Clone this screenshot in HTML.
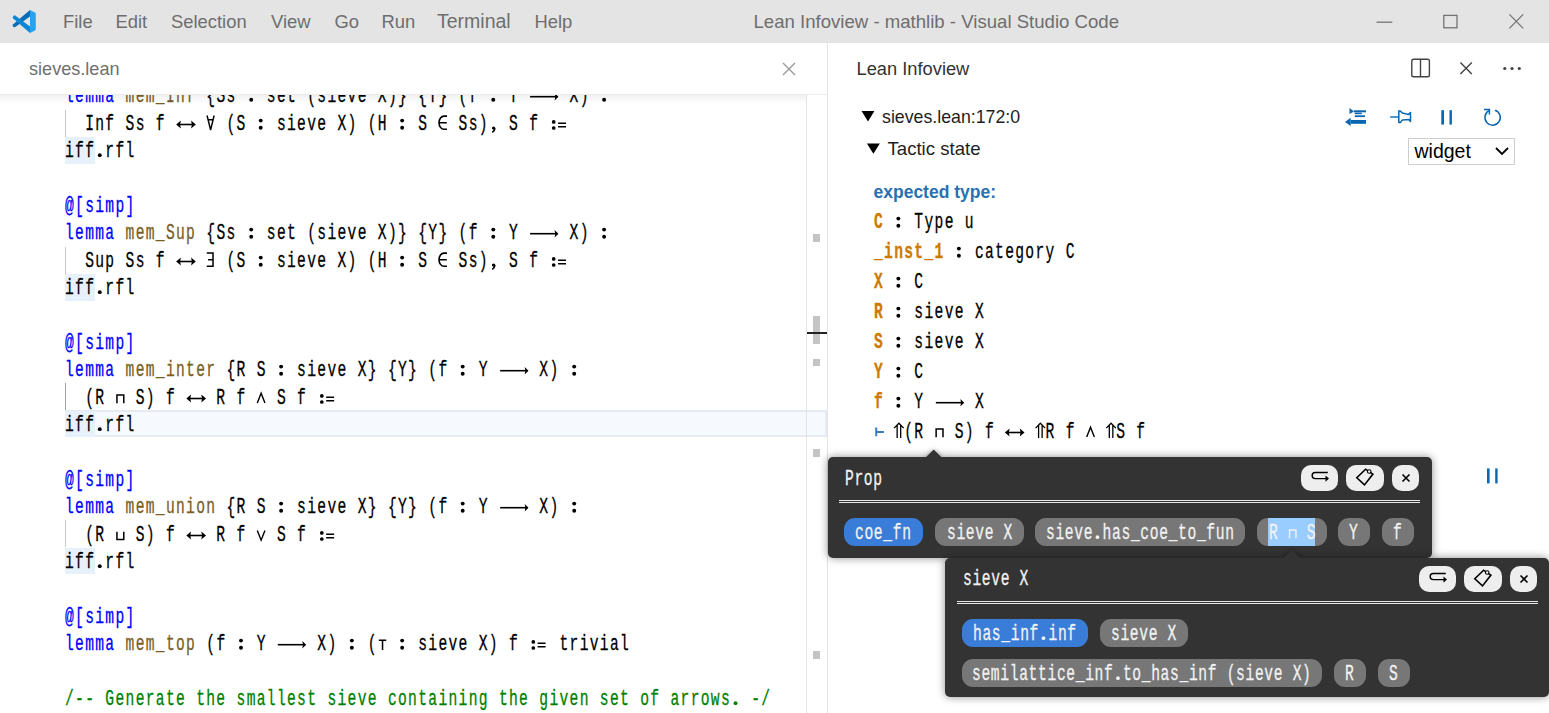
<!DOCTYPE html>
<html><head><meta charset="utf-8"><style>
*{margin:0;padding:0;box-sizing:border-box}
html,body{width:1549px;height:713px;overflow:hidden;background:#fff;position:relative;-webkit-font-smoothing:antialiased}
.a{position:absolute}
.ui{position:absolute;font-family:"Liberation Sans",sans-serif;white-space:pre;line-height:1}
.ln{position:absolute;left:65.329px;white-space:pre;font-family:"Liberation Mono",monospace;font-size:21.5px;line-height:27.38px;color:#000;transform:scaleX(0.68000);transform-origin:0 0;letter-spacing:1.9382px;-webkit-text-stroke:0.3px currentColor}
.iv{left:874.330px;line-height:27.38px}
.ib{display:inline-block;position:relative;height:0}
.c1{display:inline-block;text-align:center}
.kw{color:#0000ff} .fn{color:#795e26} .cm{color:#008000}
.iff{}
.hyp{color:#cc7a00;font-weight:bold}
.ts{color:#3b7bbf}
.pop{position:absolute;background:#333;border-radius:5px;box-shadow:0 0 8px rgba(0,0,0,.45)}
.parr{position:absolute;width:11.4px;height:11.4px;background:#333;transform:rotate(45deg)} .parr.sh{box-shadow:0 0 5px rgba(0,0,0,.4)}
.pt{position:absolute;white-space:pre;font-family:"Liberation Mono",monospace;font-size:21.5px;line-height:24px;color:#f2f2f2;transform:scaleX(0.68000);transform-origin:0 0;letter-spacing:0.9676px;-webkit-text-stroke:0.3px currentColor}
.chip{position:absolute;border-radius:11px;overflow:hidden}
.chip.g{background:#777} .chip.b{background:#3a7dd8}
.sel{position:absolute;top:0;bottom:0;background:#99ccff}
.dline{position:absolute;height:3.6px;border-top:1px solid #e6e6e6;border-bottom:1px solid #e6e6e6}
.btn{position:absolute;background:#eee;border-radius:10px;display:flex;align-items:center;justify-content:center}
</style></head><body>
<!-- title bar -->
<div class="a" style="left:0;top:0;width:1549px;height:43px;background:#e4e4e4"></div>
<svg class="a" style="left:8px;top:6px" width="32" height="32" viewBox="0 0 32 32">
 <path d="M22 4 L22 10.5 L7.3 20.9 Q6 21.6 5 20.4 L4.6 19.5 Q4.4 18.8 5.2 18.2 Z" fill="#0a6db5"/>
 <path d="M7.2 9.4 L22 20.4 L22 27 L5.2 12.6 Q4.4 11.9 4.8 11.2 L5.4 10.2 Q6.2 9.0 7.2 9.4 Z" fill="#0c86d6"/>
 <path d="M22 4 L27 6.6 Q27.8 7.1 27.8 8 L27.8 23 Q27.8 23.9 27 24.4 L22 27 Z" fill="#27a2ee"/>
</svg>
<div class="ui" style="left:63px;top:12.7px;font-size:18.4px;color:#6e6e6e">File</div>
<div class="ui" style="left:115.5px;top:12.7px;font-size:18.4px;color:#6e6e6e">Edit</div>
<div class="ui" style="left:171px;top:12.7px;font-size:18.4px;color:#6e6e6e">Selection</div>
<div class="ui" style="left:271px;top:12.7px;font-size:18.4px;color:#6e6e6e">View</div>
<div class="ui" style="left:334.5px;top:12.7px;font-size:18.4px;color:#6e6e6e">Go</div>
<div class="ui" style="left:381.5px;top:12.7px;font-size:18.4px;color:#6e6e6e">Run</div>
<div class="ui" style="left:437px;top:12.4px;font-size:19.5px;color:#6e6e6e">Terminal</div>
<div class="ui" style="left:534.5px;top:12.7px;font-size:18.4px;color:#6e6e6e">Help</div>
<div class="ui" style="left:753.5px;top:12.7px;font-size:18.6px;color:#6e6e6e">Lean Infoview - mathlib - Visual Studio Code</div>
<svg class="a" style="left:1370px;top:8px" width="160" height="28" viewBox="0 0 160 28">
 <path d="M6.5 14.2 H22.3" stroke="#737373" stroke-width="1.3"/>
 <rect x="73.8" y="7.4" width="13.2" height="12.4" stroke="#737373" stroke-width="1.3" fill="none"/>
 <path d="M139.4 6.4 L153.2 20.4 M153.2 6.4 L139.4 20.4" stroke="#737373" stroke-width="1.3"/>
</svg>

<!-- editor tab bar -->
<div class="a" style="left:0;top:43px;width:827px;height:52px;background:#fff;border-bottom:1px solid #ececec"></div>
<div class="ui" style="left:29px;top:59.8px;font-size:18.1px;color:#6f6f6f">sieves.lean</div>
<svg class="a" style="left:780px;top:59.5px" width="18" height="18" viewBox="0 0 18 18"><path d="M3 3 L15 15 M15 3 L3 15" stroke="#999" stroke-width="1.4"/></svg>

<!-- editor content -->
<div class="a" style="left:0;top:95px;width:827px;height:618px;overflow:hidden">
 <div class="a" style="left:0;top:-95px;width:827px;height:713px">
  <div class="a" style="left:65px;top:410px;width:762px;height:27.4px;border:2px solid #e6ebf2;background:#f6f9fd"></div>
  <div class="a" style="left:65px;top:110px;width:1px;height:27px;background:#c8c8c8"></div>
  <div class="a" style="left:65px;top:247px;width:1px;height:27px;background:#c8c8c8"></div>
  <div class="a" style="left:65px;top:383px;width:1px;height:27px;background:#a0a0a0"></div>
  <div class="a" style="left:65px;top:520px;width:1px;height:27px;background:#c8c8c8"></div>
  <div class="ln" style="top:83.49px"><span class="kw">lemma</span> <span class="fn">mem_Inf</span> {Ss <span class="ib" style="width:14.838px"><svg viewBox="0 0 10 20" preserveAspectRatio="none" style="position:absolute;left:-0.485px;bottom:-4px;width:100%;height:20px;overflow:visible"><circle cx="4.6" cy="6.6" r="1.95" fill="currentColor"/><circle cx="4.6" cy="13.75" r="1.95" fill="currentColor"/></svg></span> set (sieve X)} {Y} (f <span class="ib" style="width:14.838px"><svg viewBox="0 0 10 20" preserveAspectRatio="none" style="position:absolute;left:-0.485px;bottom:-4px;width:100%;height:20px;overflow:visible"><circle cx="4.6" cy="6.6" r="1.95" fill="currentColor"/><circle cx="4.6" cy="13.75" r="1.95" fill="currentColor"/></svg></span> Y <span class="ib" style="width:44.515px"><svg viewBox="0 0 30 20" preserveAspectRatio="none" style="position:absolute;left:-0.485px;bottom:-4px;width:100%;height:20px;overflow:visible"><path d="M1.3 10.7 H28.5" stroke="currentColor" stroke-width="1.6" fill="none" stroke-linecap="butt"/><path d="M29.4 10.7 L25.6 7 L26.3 10.7 L25.6 14.4 Z" fill="currentColor"/></svg></span> X) <span class="ib" style="width:14.838px"><svg viewBox="0 0 10 20" preserveAspectRatio="none" style="position:absolute;left:-0.485px;bottom:-4px;width:100%;height:20px;overflow:visible"><circle cx="4.6" cy="6.6" r="1.95" fill="currentColor"/><circle cx="4.6" cy="13.75" r="1.95" fill="currentColor"/></svg></span></div><div class="ln" style="top:110.87px">  Inf Ss f <span class="ib" style="width:29.676px"><svg viewBox="0 0 20 20" preserveAspectRatio="none" style="position:absolute;left:-0.485px;bottom:-4px;width:100%;height:20px;overflow:visible"><path d="M3 10.5 H17" stroke="currentColor" stroke-width="1.6" fill="none" stroke-linecap="butt"/><path d="M0.3 10.5 L5.0 6.5 L4.2 10.5 L5.0 14.5 Z M19.8 10.5 L15.1 6.5 L15.9 10.5 L15.1 14.5 Z" fill="currentColor"/></svg></span> <span class="ib" style="width:14.838px"><svg viewBox="0 0 10 20" preserveAspectRatio="none" style="position:absolute;left:-0.485px;bottom:-4px;width:100%;height:20px;overflow:visible"><path d="M1.3 1.5 L4.8 16 L8.3 1.5 M2.4 5.8 H7.2" stroke="currentColor" stroke-width="1.4" fill="none" stroke-linecap="butt"/></svg></span> (S <span class="ib" style="width:14.838px"><svg viewBox="0 0 10 20" preserveAspectRatio="none" style="position:absolute;left:-0.485px;bottom:-4px;width:100%;height:20px;overflow:visible"><circle cx="4.6" cy="6.6" r="1.95" fill="currentColor"/><circle cx="4.6" cy="13.75" r="1.95" fill="currentColor"/></svg></span> sieve X) (H <span class="ib" style="width:14.838px"><svg viewBox="0 0 10 20" preserveAspectRatio="none" style="position:absolute;left:-0.485px;bottom:-4px;width:100%;height:20px;overflow:visible"><circle cx="4.6" cy="6.6" r="1.95" fill="currentColor"/><circle cx="4.6" cy="13.75" r="1.95" fill="currentColor"/></svg></span> S <span class="ib" style="width:14.838px"><svg viewBox="0 0 10 20" preserveAspectRatio="none" style="position:absolute;left:-0.485px;bottom:-4px;width:100%;height:20px;overflow:visible"><path d="M8.6 2.1 H5.6 A4.9 6.6 0 0 0 5.6 15.3 H8.6 M0.8 8.7 H8.4" stroke="currentColor" stroke-width="1.6" fill="none" stroke-linecap="butt"/></svg></span> Ss)<span class="ib" style="width:14.838px"><svg viewBox="0 0 10 20" preserveAspectRatio="none" style="position:absolute;left:-0.485px;bottom:-4px;width:100%;height:20px;overflow:visible"><path d="M6.3 14.3 Q6.2 16.6 3.6 18.4" stroke="currentColor" stroke-width="1.5" fill="none" stroke-linecap="butt"/><circle cx="4.9" cy="14.1" r="1.65" fill="currentColor"/></svg></span> S f <span class="ib" style="width:29.676px"><svg viewBox="0 0 20 20" preserveAspectRatio="none" style="position:absolute;left:-0.485px;bottom:-4px;width:100%;height:20px;overflow:visible"><path d="M8.8 9.2 H16.7 M8.8 12.8 H16.7" stroke="currentColor" stroke-width="1.6" fill="none" stroke-linecap="butt"/><circle cx="4.5" cy="7.9" r="1.85" fill="currentColor"/><circle cx="4.5" cy="14.0" r="1.85" fill="currentColor"/></svg></span></div><div class="a" style="left:65px;top:136.96px;width:30px;height:26.7px;background:#e6f1fc"></div><div class="ln" style="top:138.25px"><span class="iff">iff</span><span class="ib" style="width:14.838px"><svg viewBox="0 0 10 20" preserveAspectRatio="none" style="position:absolute;left:-0.485px;bottom:-4px;width:100%;height:20px;overflow:visible"><circle cx="4.8" cy="14.15" r="1.95" fill="currentColor"/></svg></span>rfl</div><div class="ln" style="top:193.01px"><span class="kw">@[simp]</span></div><div class="ln" style="top:220.39px"><span class="kw">lemma</span> <span class="fn">mem_Sup</span> {Ss <span class="ib" style="width:14.838px"><svg viewBox="0 0 10 20" preserveAspectRatio="none" style="position:absolute;left:-0.485px;bottom:-4px;width:100%;height:20px;overflow:visible"><circle cx="4.6" cy="6.6" r="1.95" fill="currentColor"/><circle cx="4.6" cy="13.75" r="1.95" fill="currentColor"/></svg></span> set (sieve X)} {Y} (f <span class="ib" style="width:14.838px"><svg viewBox="0 0 10 20" preserveAspectRatio="none" style="position:absolute;left:-0.485px;bottom:-4px;width:100%;height:20px;overflow:visible"><circle cx="4.6" cy="6.6" r="1.95" fill="currentColor"/><circle cx="4.6" cy="13.75" r="1.95" fill="currentColor"/></svg></span> Y <span class="ib" style="width:44.515px"><svg viewBox="0 0 30 20" preserveAspectRatio="none" style="position:absolute;left:-0.485px;bottom:-4px;width:100%;height:20px;overflow:visible"><path d="M1.3 10.7 H28.5" stroke="currentColor" stroke-width="1.6" fill="none" stroke-linecap="butt"/><path d="M29.4 10.7 L25.6 7 L26.3 10.7 L25.6 14.4 Z" fill="currentColor"/></svg></span> X) <span class="ib" style="width:14.838px"><svg viewBox="0 0 10 20" preserveAspectRatio="none" style="position:absolute;left:-0.485px;bottom:-4px;width:100%;height:20px;overflow:visible"><circle cx="4.6" cy="6.6" r="1.95" fill="currentColor"/><circle cx="4.6" cy="13.75" r="1.95" fill="currentColor"/></svg></span></div><div class="ln" style="top:247.77px">  Sup Ss f <span class="ib" style="width:29.676px"><svg viewBox="0 0 20 20" preserveAspectRatio="none" style="position:absolute;left:-0.485px;bottom:-4px;width:100%;height:20px;overflow:visible"><path d="M3 10.5 H17" stroke="currentColor" stroke-width="1.6" fill="none" stroke-linecap="butt"/><path d="M0.3 10.5 L5.0 6.5 L4.2 10.5 L5.0 14.5 Z M19.8 10.5 L15.1 6.5 L15.9 10.5 L15.1 14.5 Z" fill="currentColor"/></svg></span> <span class="ib" style="width:14.838px"><svg viewBox="0 0 10 20" preserveAspectRatio="none" style="position:absolute;left:-0.485px;bottom:-4px;width:100%;height:20px;overflow:visible"><path d="M1 1.9 H7.2 V15.3 H1 M2.3 8.7 H7.2" stroke="currentColor" stroke-width="1.5" fill="none" stroke-linecap="butt"/></svg></span> (S <span class="ib" style="width:14.838px"><svg viewBox="0 0 10 20" preserveAspectRatio="none" style="position:absolute;left:-0.485px;bottom:-4px;width:100%;height:20px;overflow:visible"><circle cx="4.6" cy="6.6" r="1.95" fill="currentColor"/><circle cx="4.6" cy="13.75" r="1.95" fill="currentColor"/></svg></span> sieve X) (H <span class="ib" style="width:14.838px"><svg viewBox="0 0 10 20" preserveAspectRatio="none" style="position:absolute;left:-0.485px;bottom:-4px;width:100%;height:20px;overflow:visible"><circle cx="4.6" cy="6.6" r="1.95" fill="currentColor"/><circle cx="4.6" cy="13.75" r="1.95" fill="currentColor"/></svg></span> S <span class="ib" style="width:14.838px"><svg viewBox="0 0 10 20" preserveAspectRatio="none" style="position:absolute;left:-0.485px;bottom:-4px;width:100%;height:20px;overflow:visible"><path d="M8.6 2.1 H5.6 A4.9 6.6 0 0 0 5.6 15.3 H8.6 M0.8 8.7 H8.4" stroke="currentColor" stroke-width="1.6" fill="none" stroke-linecap="butt"/></svg></span> Ss)<span class="ib" style="width:14.838px"><svg viewBox="0 0 10 20" preserveAspectRatio="none" style="position:absolute;left:-0.485px;bottom:-4px;width:100%;height:20px;overflow:visible"><path d="M6.3 14.3 Q6.2 16.6 3.6 18.4" stroke="currentColor" stroke-width="1.5" fill="none" stroke-linecap="butt"/><circle cx="4.9" cy="14.1" r="1.65" fill="currentColor"/></svg></span> S f <span class="ib" style="width:29.676px"><svg viewBox="0 0 20 20" preserveAspectRatio="none" style="position:absolute;left:-0.485px;bottom:-4px;width:100%;height:20px;overflow:visible"><path d="M8.8 9.2 H16.7 M8.8 12.8 H16.7" stroke="currentColor" stroke-width="1.6" fill="none" stroke-linecap="butt"/><circle cx="4.5" cy="7.9" r="1.85" fill="currentColor"/><circle cx="4.5" cy="14.0" r="1.85" fill="currentColor"/></svg></span></div><div class="a" style="left:65px;top:273.86px;width:30px;height:26.7px;background:#e6f1fc"></div><div class="ln" style="top:275.15px"><span class="iff">iff</span><span class="ib" style="width:14.838px"><svg viewBox="0 0 10 20" preserveAspectRatio="none" style="position:absolute;left:-0.485px;bottom:-4px;width:100%;height:20px;overflow:visible"><circle cx="4.8" cy="14.15" r="1.95" fill="currentColor"/></svg></span>rfl</div><div class="ln" style="top:329.91px"><span class="kw">@[simp]</span></div><div class="ln" style="top:357.29px"><span class="kw">lemma</span> <span class="fn">mem_inter</span> {R S <span class="ib" style="width:14.838px"><svg viewBox="0 0 10 20" preserveAspectRatio="none" style="position:absolute;left:-0.485px;bottom:-4px;width:100%;height:20px;overflow:visible"><circle cx="4.6" cy="6.6" r="1.95" fill="currentColor"/><circle cx="4.6" cy="13.75" r="1.95" fill="currentColor"/></svg></span> sieve X} {Y} (f <span class="ib" style="width:14.838px"><svg viewBox="0 0 10 20" preserveAspectRatio="none" style="position:absolute;left:-0.485px;bottom:-4px;width:100%;height:20px;overflow:visible"><circle cx="4.6" cy="6.6" r="1.95" fill="currentColor"/><circle cx="4.6" cy="13.75" r="1.95" fill="currentColor"/></svg></span> Y <span class="ib" style="width:44.515px"><svg viewBox="0 0 30 20" preserveAspectRatio="none" style="position:absolute;left:-0.485px;bottom:-4px;width:100%;height:20px;overflow:visible"><path d="M1.3 10.7 H28.5" stroke="currentColor" stroke-width="1.6" fill="none" stroke-linecap="butt"/><path d="M29.4 10.7 L25.6 7 L26.3 10.7 L25.6 14.4 Z" fill="currentColor"/></svg></span> X) <span class="ib" style="width:14.838px"><svg viewBox="0 0 10 20" preserveAspectRatio="none" style="position:absolute;left:-0.485px;bottom:-4px;width:100%;height:20px;overflow:visible"><circle cx="4.6" cy="6.6" r="1.95" fill="currentColor"/><circle cx="4.6" cy="13.75" r="1.95" fill="currentColor"/></svg></span></div><div class="ln" style="top:384.67px">  (R <span class="ib" style="width:14.838px"><svg viewBox="0 0 10 20" preserveAspectRatio="none" style="position:absolute;left:-0.485px;bottom:-4px;width:100%;height:20px;overflow:visible"><path d="M1.6 15.2 V7.0 H8.4 V15.2" stroke="currentColor" stroke-width="1.5" fill="none" stroke-linecap="butt"/></svg></span> S) f <span class="ib" style="width:29.676px"><svg viewBox="0 0 20 20" preserveAspectRatio="none" style="position:absolute;left:-0.485px;bottom:-4px;width:100%;height:20px;overflow:visible"><path d="M3 10.5 H17" stroke="currentColor" stroke-width="1.6" fill="none" stroke-linecap="butt"/><path d="M0.3 10.5 L5.0 6.5 L4.2 10.5 L5.0 14.5 Z M19.8 10.5 L15.1 6.5 L15.9 10.5 L15.1 14.5 Z" fill="currentColor"/></svg></span> R f <span class="ib" style="width:14.838px"><svg viewBox="0 0 10 20" preserveAspectRatio="none" style="position:absolute;left:-0.485px;bottom:-4px;width:100%;height:20px;overflow:visible"><path d="M1.2 15 L5 5.2 L8.8 15" stroke="currentColor" stroke-width="1.4" fill="none" stroke-linecap="butt"/></svg></span> S f <span class="ib" style="width:29.676px"><svg viewBox="0 0 20 20" preserveAspectRatio="none" style="position:absolute;left:-0.485px;bottom:-4px;width:100%;height:20px;overflow:visible"><path d="M8.8 9.2 H16.7 M8.8 12.8 H16.7" stroke="currentColor" stroke-width="1.6" fill="none" stroke-linecap="butt"/><circle cx="4.5" cy="7.9" r="1.85" fill="currentColor"/><circle cx="4.5" cy="14.0" r="1.85" fill="currentColor"/></svg></span></div><div class="a" style="left:65px;top:410.76px;width:30px;height:26.7px;background:#e6f1fc"></div><div class="ln" style="top:412.05px"><span class="iff">iff</span><span class="ib" style="width:14.838px"><svg viewBox="0 0 10 20" preserveAspectRatio="none" style="position:absolute;left:-0.485px;bottom:-4px;width:100%;height:20px;overflow:visible"><circle cx="4.8" cy="14.15" r="1.95" fill="currentColor"/></svg></span>rfl</div><div class="ln" style="top:466.81px"><span class="kw">@[simp]</span></div><div class="ln" style="top:494.19px"><span class="kw">lemma</span> <span class="fn">mem_union</span> {R S <span class="ib" style="width:14.838px"><svg viewBox="0 0 10 20" preserveAspectRatio="none" style="position:absolute;left:-0.485px;bottom:-4px;width:100%;height:20px;overflow:visible"><circle cx="4.6" cy="6.6" r="1.95" fill="currentColor"/><circle cx="4.6" cy="13.75" r="1.95" fill="currentColor"/></svg></span> sieve X} {Y} (f <span class="ib" style="width:14.838px"><svg viewBox="0 0 10 20" preserveAspectRatio="none" style="position:absolute;left:-0.485px;bottom:-4px;width:100%;height:20px;overflow:visible"><circle cx="4.6" cy="6.6" r="1.95" fill="currentColor"/><circle cx="4.6" cy="13.75" r="1.95" fill="currentColor"/></svg></span> Y <span class="ib" style="width:44.515px"><svg viewBox="0 0 30 20" preserveAspectRatio="none" style="position:absolute;left:-0.485px;bottom:-4px;width:100%;height:20px;overflow:visible"><path d="M1.3 10.7 H28.5" stroke="currentColor" stroke-width="1.6" fill="none" stroke-linecap="butt"/><path d="M29.4 10.7 L25.6 7 L26.3 10.7 L25.6 14.4 Z" fill="currentColor"/></svg></span> X) <span class="ib" style="width:14.838px"><svg viewBox="0 0 10 20" preserveAspectRatio="none" style="position:absolute;left:-0.485px;bottom:-4px;width:100%;height:20px;overflow:visible"><circle cx="4.6" cy="6.6" r="1.95" fill="currentColor"/><circle cx="4.6" cy="13.75" r="1.95" fill="currentColor"/></svg></span></div><div class="ln" style="top:521.57px">  (R <span class="ib" style="width:14.838px"><svg viewBox="0 0 10 20" preserveAspectRatio="none" style="position:absolute;left:-0.485px;bottom:-4px;width:100%;height:20px;overflow:visible"><path d="M1.6 6.8 V14.4 H8.4 V6.8" stroke="currentColor" stroke-width="1.5" fill="none" stroke-linecap="butt"/></svg></span> S) f <span class="ib" style="width:29.676px"><svg viewBox="0 0 20 20" preserveAspectRatio="none" style="position:absolute;left:-0.485px;bottom:-4px;width:100%;height:20px;overflow:visible"><path d="M3 10.5 H17" stroke="currentColor" stroke-width="1.6" fill="none" stroke-linecap="butt"/><path d="M0.3 10.5 L5.0 6.5 L4.2 10.5 L5.0 14.5 Z M19.8 10.5 L15.1 6.5 L15.9 10.5 L15.1 14.5 Z" fill="currentColor"/></svg></span> R f <span class="ib" style="width:14.838px"><svg viewBox="0 0 10 20" preserveAspectRatio="none" style="position:absolute;left:-0.485px;bottom:-4px;width:100%;height:20px;overflow:visible"><path d="M1.2 5.6 L5 15.2 L8.8 5.6" stroke="currentColor" stroke-width="1.4" fill="none" stroke-linecap="butt"/></svg></span> S f <span class="ib" style="width:29.676px"><svg viewBox="0 0 20 20" preserveAspectRatio="none" style="position:absolute;left:-0.485px;bottom:-4px;width:100%;height:20px;overflow:visible"><path d="M8.8 9.2 H16.7 M8.8 12.8 H16.7" stroke="currentColor" stroke-width="1.6" fill="none" stroke-linecap="butt"/><circle cx="4.5" cy="7.9" r="1.85" fill="currentColor"/><circle cx="4.5" cy="14.0" r="1.85" fill="currentColor"/></svg></span></div><div class="a" style="left:65px;top:547.66px;width:30px;height:26.7px;background:#e6f1fc"></div><div class="ln" style="top:548.95px"><span class="iff">iff</span><span class="ib" style="width:14.838px"><svg viewBox="0 0 10 20" preserveAspectRatio="none" style="position:absolute;left:-0.485px;bottom:-4px;width:100%;height:20px;overflow:visible"><circle cx="4.8" cy="14.15" r="1.95" fill="currentColor"/></svg></span>rfl</div><div class="ln" style="top:603.71px"><span class="kw">@[simp]</span></div><div class="ln" style="top:631.09px"><span class="kw">lemma</span> <span class="fn">mem_top</span> (f <span class="ib" style="width:14.838px"><svg viewBox="0 0 10 20" preserveAspectRatio="none" style="position:absolute;left:-0.485px;bottom:-4px;width:100%;height:20px;overflow:visible"><circle cx="4.6" cy="6.6" r="1.95" fill="currentColor"/><circle cx="4.6" cy="13.75" r="1.95" fill="currentColor"/></svg></span> Y <span class="ib" style="width:44.515px"><svg viewBox="0 0 30 20" preserveAspectRatio="none" style="position:absolute;left:-0.485px;bottom:-4px;width:100%;height:20px;overflow:visible"><path d="M1.3 10.7 H28.5" stroke="currentColor" stroke-width="1.6" fill="none" stroke-linecap="butt"/><path d="M29.4 10.7 L25.6 7 L26.3 10.7 L25.6 14.4 Z" fill="currentColor"/></svg></span> X) <span class="ib" style="width:14.838px"><svg viewBox="0 0 10 20" preserveAspectRatio="none" style="position:absolute;left:-0.485px;bottom:-4px;width:100%;height:20px;overflow:visible"><circle cx="4.6" cy="6.6" r="1.95" fill="currentColor"/><circle cx="4.6" cy="13.75" r="1.95" fill="currentColor"/></svg></span> (<span class="ib" style="width:14.838px"><svg viewBox="0 0 10 20" preserveAspectRatio="none" style="position:absolute;left:-0.485px;bottom:-4px;width:100%;height:20px;overflow:visible"><path d="M1 6.3 H8.4 M4.7 6.3 V16" stroke="currentColor" stroke-width="1.5" fill="none" stroke-linecap="butt"/></svg></span> <span class="ib" style="width:14.838px"><svg viewBox="0 0 10 20" preserveAspectRatio="none" style="position:absolute;left:-0.485px;bottom:-4px;width:100%;height:20px;overflow:visible"><circle cx="4.6" cy="6.6" r="1.95" fill="currentColor"/><circle cx="4.6" cy="13.75" r="1.95" fill="currentColor"/></svg></span> sieve X) f <span class="ib" style="width:29.676px"><svg viewBox="0 0 20 20" preserveAspectRatio="none" style="position:absolute;left:-0.485px;bottom:-4px;width:100%;height:20px;overflow:visible"><path d="M8.8 9.2 H16.7 M8.8 12.8 H16.7" stroke="currentColor" stroke-width="1.6" fill="none" stroke-linecap="butt"/><circle cx="4.5" cy="7.9" r="1.85" fill="currentColor"/><circle cx="4.5" cy="14.0" r="1.85" fill="currentColor"/></svg></span> trivial</div><div class="ln" style="top:685.85px"><span class="cm">/-- Generate the smallest sieve containing the given set of arrows<span class="ib" style="width:14.838px"><svg viewBox="0 0 10 20" preserveAspectRatio="none" style="position:absolute;left:-0.485px;bottom:-4px;width:100%;height:20px;overflow:visible"><circle cx="4.8" cy="14.15" r="1.95" fill="currentColor"/></svg></span> -/</span></div>
 </div>
 <div class="a" style="left:0;top:0;width:806px;height:8px;background:linear-gradient(rgba(0,0,0,.06),rgba(0,0,0,0))"></div>
</div>
<!-- scrollbar -->
<div class="a" style="left:806px;top:94px;width:1px;height:619px;background:#e4e4e4"></div>
<div class="a" style="left:813px;top:234px;width:7px;height:7.5px;background:#c4c4c4"></div>
<div class="a" style="left:813px;top:315.5px;width:7px;height:28.5px;background:#c4c4c4"></div>
<div class="a" style="left:807px;top:332px;width:20px;height:1.5px;background:#222"></div>
<div class="a" style="left:813px;top:359px;width:7px;height:7px;background:#c4c4c4"></div>
<div class="a" style="left:813px;top:449px;width:7px;height:7.5px;background:#c4c4c4"></div>
<div class="a" style="left:813px;top:651px;width:7px;height:7.5px;background:#c4c4c4"></div>
<div class="a" style="left:827px;top:43px;width:1px;height:670px;background:#e4e4e4"></div>

<!-- infoview header -->
<div class="ui" style="left:856.5px;top:60px;font-size:18.3px;color:#333">Lean Infoview</div>
<svg class="a" style="left:1405px;top:52px" width="130" height="32" viewBox="0 0 130 32">
 <rect x="6.8" y="7.2" width="17.6" height="17.6" rx="1.8" stroke="#424242" stroke-width="1.4" fill="none"/>
 <path d="M15.5 7.2 V24.8" stroke="#424242" stroke-width="1.4"/>
 <path d="M55.4 10.5 L66.8 21.9 M66.8 10.5 L55.4 21.9" stroke="#424242" stroke-width="1.4"/>
 <circle cx="99.8" cy="16.5" r="1.6" fill="#424242"/><circle cx="107" cy="16.5" r="1.6" fill="#424242"/><circle cx="114.3" cy="16.5" r="1.6" fill="#424242"/>
</svg>

<!-- infoview body -->
<svg class="a" style="left:861px;top:110px" width="22" height="50" viewBox="0 0 22 50">
 <path d="M0.5 1 H13.4 L7 11.6 Z" fill="#000"/>
 <path d="M5.9 33.4 H18.8 L12.4 43.8 Z" fill="#000"/>
</svg>
<div class="ui" style="left:882px;top:108.7px;font-size:17.75px;color:#1e1e1e">sieves.lean:172:0</div>
<div class="ui" style="left:887.5px;top:140px;font-size:18.6px;color:#1e1e1e">Tactic state</div>
<svg class="a" style="left:1340px;top:102px" width="165" height="30" viewBox="0 0 165 30" fill="#0a66b0">
 <path d="M9.5 6 L14 9.5 L9.5 12 Z"/>
 <rect x="14" y="8.3" width="12" height="2"/><rect x="14.8" y="10.6" width="7" height="1.6"/><rect x="14.8" y="13.3" width="10.2" height="1.8"/>
 <rect x="10.7" y="18" width="15.3" height="3.8"/><path d="M5 19.9 L10.7 15.8 V24 Z"/>
 <path d="M50.2 15 H58.4" stroke="#0a66b0" stroke-width="1.4" fill="none"/><path d="M58.8 8.9 L60.3 8.9 L62.4 11.1 L68.6 12.4 L70.5 10.5 V19.4 L68.7 17.4 L62.4 17.9 L60.4 20.5 L58.8 20.5 Z" stroke="#0a66b0" stroke-width="1.5" fill="none" stroke-linejoin="round"/>
 <rect x="101.3" y="8.2" width="2.7" height="14.4"/><rect x="109.5" y="8.2" width="2.4" height="14.4"/>
 <path d="M155.1 8.2 A7.7 7.7 0 1 1 149.0 8.7" stroke="#0a66b0" stroke-width="1.5" fill="none"/>
 <path d="M144 7.4 H149.4 V12.6" stroke="#0a66b0" stroke-width="1.5" fill="none"/>
</svg>
<div class="a" style="left:1408px;top:138px;width:107px;height:27px;border:1px solid #cecece;background:#fff"></div>
<div class="ui" style="left:1414.5px;top:142.2px;font-size:19.5px;color:#000">widget</div>
<svg class="a" style="left:1494px;top:144px" width="16" height="14" viewBox="0 0 16 14"><path d="M2 4 L8 10 L14 4" stroke="#000" stroke-width="1.8" fill="none"/></svg>
<div class="ui" style="left:873.5px;top:184px;font-size:17.5px;font-weight:bold;color:#2a70b2">expected type:</div>
<div class="ln iv" style="top:209.39px"><span class="hyp">C</span> <span class="ib" style="width:14.838px"><svg viewBox="0 0 10 20" preserveAspectRatio="none" style="position:absolute;left:-0.485px;bottom:-4px;width:100%;height:20px;overflow:visible"><circle cx="4.6" cy="6.6" r="1.95" fill="currentColor"/><circle cx="4.6" cy="13.75" r="1.95" fill="currentColor"/></svg></span> Type u</div><div class="ln iv" style="top:239.39px"><span class="hyp">_inst_1</span> <span class="ib" style="width:14.838px"><svg viewBox="0 0 10 20" preserveAspectRatio="none" style="position:absolute;left:-0.485px;bottom:-4px;width:100%;height:20px;overflow:visible"><circle cx="4.6" cy="6.6" r="1.95" fill="currentColor"/><circle cx="4.6" cy="13.75" r="1.95" fill="currentColor"/></svg></span> category C</div><div class="ln iv" style="top:269.39px"><span class="hyp">X</span> <span class="ib" style="width:14.838px"><svg viewBox="0 0 10 20" preserveAspectRatio="none" style="position:absolute;left:-0.485px;bottom:-4px;width:100%;height:20px;overflow:visible"><circle cx="4.6" cy="6.6" r="1.95" fill="currentColor"/><circle cx="4.6" cy="13.75" r="1.95" fill="currentColor"/></svg></span> C</div><div class="ln iv" style="top:299.39px"><span class="hyp">R</span> <span class="ib" style="width:14.838px"><svg viewBox="0 0 10 20" preserveAspectRatio="none" style="position:absolute;left:-0.485px;bottom:-4px;width:100%;height:20px;overflow:visible"><circle cx="4.6" cy="6.6" r="1.95" fill="currentColor"/><circle cx="4.6" cy="13.75" r="1.95" fill="currentColor"/></svg></span> sieve X</div><div class="ln iv" style="top:329.39px"><span class="hyp">S</span> <span class="ib" style="width:14.838px"><svg viewBox="0 0 10 20" preserveAspectRatio="none" style="position:absolute;left:-0.485px;bottom:-4px;width:100%;height:20px;overflow:visible"><circle cx="4.6" cy="6.6" r="1.95" fill="currentColor"/><circle cx="4.6" cy="13.75" r="1.95" fill="currentColor"/></svg></span> sieve X</div><div class="ln iv" style="top:359.39px"><span class="hyp">Y</span> <span class="ib" style="width:14.838px"><svg viewBox="0 0 10 20" preserveAspectRatio="none" style="position:absolute;left:-0.485px;bottom:-4px;width:100%;height:20px;overflow:visible"><circle cx="4.6" cy="6.6" r="1.95" fill="currentColor"/><circle cx="4.6" cy="13.75" r="1.95" fill="currentColor"/></svg></span> C</div><div class="ln iv" style="top:389.39px"><span class="hyp">f</span> <span class="ib" style="width:14.838px"><svg viewBox="0 0 10 20" preserveAspectRatio="none" style="position:absolute;left:-0.485px;bottom:-4px;width:100%;height:20px;overflow:visible"><circle cx="4.6" cy="6.6" r="1.95" fill="currentColor"/><circle cx="4.6" cy="13.75" r="1.95" fill="currentColor"/></svg></span> Y <span class="ib" style="width:44.515px"><svg viewBox="0 0 30 20" preserveAspectRatio="none" style="position:absolute;left:-0.485px;bottom:-4px;width:100%;height:20px;overflow:visible"><path d="M1.3 10.7 H28.5" stroke="currentColor" stroke-width="1.6" fill="none" stroke-linecap="butt"/><path d="M29.4 10.7 L25.6 7 L26.3 10.7 L25.6 14.4 Z" fill="currentColor"/></svg></span> X</div><div class="ln iv" style="top:419.39px"><span class="ts"><span class="ib" style="width:14.838px"><svg viewBox="0 0 10 20" preserveAspectRatio="none" style="position:absolute;left:-0.485px;bottom:-4px;width:100%;height:20px;overflow:visible"><path d="M2.2 5.6 V14.2 M2.2 10 H9.8" stroke="currentColor" stroke-width="2.0" fill="none" stroke-linecap="butt"/></svg></span></span> <span class="ib" style="width:14.838px"><svg viewBox="0 0 10 20" preserveAspectRatio="none" style="position:absolute;left:-0.485px;bottom:-4px;width:100%;height:20px;overflow:visible"><path d="M3.4 16 V2.6 M6.9 16 V2.6 M0.4 6.1 L5.15 1.2 L9.9 6.1" stroke="currentColor" stroke-width="1.3" fill="none" stroke-linecap="butt"/></svg></span>(R <span class="ib" style="width:14.838px"><svg viewBox="0 0 10 20" preserveAspectRatio="none" style="position:absolute;left:-0.485px;bottom:-4px;width:100%;height:20px;overflow:visible"><path d="M1.6 15.2 V7.0 H8.4 V15.2" stroke="currentColor" stroke-width="1.5" fill="none" stroke-linecap="butt"/></svg></span> S) f <span class="ib" style="width:29.676px"><svg viewBox="0 0 20 20" preserveAspectRatio="none" style="position:absolute;left:-0.485px;bottom:-4px;width:100%;height:20px;overflow:visible"><path d="M3 10.5 H17" stroke="currentColor" stroke-width="1.6" fill="none" stroke-linecap="butt"/><path d="M0.3 10.5 L5.0 6.5 L4.2 10.5 L5.0 14.5 Z M19.8 10.5 L15.1 6.5 L15.9 10.5 L15.1 14.5 Z" fill="currentColor"/></svg></span> <span class="ib" style="width:14.838px"><svg viewBox="0 0 10 20" preserveAspectRatio="none" style="position:absolute;left:-0.485px;bottom:-4px;width:100%;height:20px;overflow:visible"><path d="M3.4 16 V2.6 M6.9 16 V2.6 M0.4 6.1 L5.15 1.2 L9.9 6.1" stroke="currentColor" stroke-width="1.3" fill="none" stroke-linecap="butt"/></svg></span>R f <span class="ib" style="width:14.838px"><svg viewBox="0 0 10 20" preserveAspectRatio="none" style="position:absolute;left:-0.485px;bottom:-4px;width:100%;height:20px;overflow:visible"><path d="M1.2 15 L5 5.2 L8.8 15" stroke="currentColor" stroke-width="1.4" fill="none" stroke-linecap="butt"/></svg></span> <span class="ib" style="width:14.838px"><svg viewBox="0 0 10 20" preserveAspectRatio="none" style="position:absolute;left:-0.485px;bottom:-4px;width:100%;height:20px;overflow:visible"><path d="M3.4 16 V2.6 M6.9 16 V2.6 M0.4 6.1 L5.15 1.2 L9.9 6.1" stroke="currentColor" stroke-width="1.3" fill="none" stroke-linecap="butt"/></svg></span>S f</div>
<svg class="a" style="left:1480px;top:462px" width="24" height="26" viewBox="0 0 24 26" fill="#0a66b0">
 <rect x="7" y="6.4" width="2.6" height="15"/><rect x="15.2" y="6.4" width="2.4" height="15"/>
</svg>

<!-- popups -->
<div class="parr sh" style="left:928px;top:451.6px"></div><div class="pop" style="left:828px;top:457px;width:604px;height:101px"></div><div class="parr" style="left:928px;top:451.6px"></div><div class="pt" style="left:845.16px;top:467.28px">Prop</div><div class="dline" style="left:839px;top:499.6px;width:581px"></div><div class="btn" style="left:1301px;top:465px;width:37px;height:26px"><svg viewBox="0 0 20 14" width="20" height="14"><path d="M17.8 1.5 H5.2 A3.05 3.05 0 0 0 5.2 7.6 H16" stroke="#000" stroke-width="1.4" fill="none"/><path d="M19 7.6 L15.5 4.4 L15.5 10.8 Z" fill="#000"/></svg></div><div class="btn" style="left:1346px;top:465px;width:38px;height:26px"><svg viewBox="0 0 20 20" width="20" height="20"><path d="M10.6 1.2 L1.8 9.8 L9.5 16.9 L17.9 6.1 Z" stroke="#000" stroke-width="1.6" fill="none" stroke-linejoin="miter"/><circle cx="14.2" cy="3.5" r="1.8" fill="#eee" stroke="#000" stroke-width="1.1"/></svg></div><div class="btn" style="left:1392px;top:465px;width:27px;height:26px"><svg viewBox="0 0 10 10" width="10" height="10"><path d="M1.5 1.5 L8.5 8.5 M8.5 1.5 L1.5 8.5" stroke="#000" stroke-width="1.6"/></svg></div><div class="chip b" style="left:844px;top:518px;width:79px;height:28px"><div class="pt" style="left:11.37px;top:3.28px">coe_fn</div></div><div class="chip g" style="left:935px;top:518px;width:89px;height:28px"><div class="pt" style="left:11.66px;top:3.28px">sieve X</div></div><div class="chip g" style="left:1035px;top:518px;width:210px;height:28px"><div class="pt" style="left:10.86px;top:3.28px">sieve<span class="ib" style="width:13.868px"><svg viewBox="0 0 10 20" preserveAspectRatio="none" style="position:absolute;left:-0.242px;bottom:-4px;width:100%;height:20px;overflow:visible"><circle cx="4.8" cy="14.15" r="1.95" fill="currentColor"/></svg></span>has_coe_to_fun</div></div><div class="chip g" style="left:1257px;top:518px;width:70px;height:28px"><div class="sel" style="left:11px;width:47px"></div><div class="pt" style="left:11.59px;top:3.28px">R <span class="ib" style="width:13.868px"><svg viewBox="0 0 10 20" preserveAspectRatio="none" style="position:absolute;left:-0.242px;bottom:-4px;width:100%;height:20px;overflow:visible"><path d="M1.6 15.2 V7.0 H8.4 V15.2" stroke="currentColor" stroke-width="1.5" fill="none" stroke-linecap="butt"/></svg></span> S</div></div><div class="chip g" style="left:1338px;top:518px;width:32px;height:28px"><div class="pt" style="left:11.45px;top:3.28px">Y</div></div><div class="chip g" style="left:1382px;top:518px;width:32px;height:28px"><div class="pt" style="left:11.45px;top:3.28px">f</div></div>
<div class="parr sh" style="left:1286px;top:552.4px"></div><div class="pop" style="left:945px;top:558px;width:604px;height:139px"></div><div class="parr" style="left:1286px;top:552.4px"></div><div class="pt" style="left:963.16px;top:566.98px">sieve X</div><div class="dline" style="left:957px;top:600.8px;width:581px"></div><div class="btn" style="left:1419px;top:565.5px;width:37px;height:26.100000000000023px"><svg viewBox="0 0 20 14" width="20" height="14"><path d="M17.8 1.5 H5.2 A3.05 3.05 0 0 0 5.2 7.6 H16" stroke="#000" stroke-width="1.4" fill="none"/><path d="M19 7.6 L15.5 4.4 L15.5 10.8 Z" fill="#000"/></svg></div><div class="btn" style="left:1464px;top:565.5px;width:38px;height:26.100000000000023px"><svg viewBox="0 0 20 20" width="20" height="20"><path d="M10.6 1.2 L1.8 9.8 L9.5 16.9 L17.9 6.1 Z" stroke="#000" stroke-width="1.6" fill="none" stroke-linejoin="miter"/><circle cx="14.2" cy="3.5" r="1.8" fill="#eee" stroke="#000" stroke-width="1.1"/></svg></div><div class="btn" style="left:1510px;top:565.5px;width:27px;height:26.100000000000023px"><svg viewBox="0 0 10 10" width="10" height="10"><path d="M1.5 1.5 L8.5 8.5 M8.5 1.5 L1.5 8.5" stroke="#000" stroke-width="1.6"/></svg></div><div class="chip b" style="left:962px;top:619px;width:126px;height:28px"><div class="pt" style="left:11.30px;top:3.28px">has_inf<span class="ib" style="width:13.868px"><svg viewBox="0 0 10 20" preserveAspectRatio="none" style="position:absolute;left:-0.242px;bottom:-4px;width:100%;height:20px;overflow:visible"><circle cx="4.8" cy="14.15" r="1.95" fill="currentColor"/></svg></span>inf</div></div><div class="chip g" style="left:1100px;top:619px;width:88px;height:28px"><div class="pt" style="left:11.16px;top:3.28px">sieve X</div></div><div class="chip g" style="left:962px;top:659px;width:360px;height:28px"><div class="pt" style="left:10.42px;top:3.28px">semilattice_inf<span class="ib" style="width:13.868px"><svg viewBox="0 0 10 20" preserveAspectRatio="none" style="position:absolute;left:-0.242px;bottom:-4px;width:100%;height:20px;overflow:visible"><circle cx="4.8" cy="14.15" r="1.95" fill="currentColor"/></svg></span>to_has_inf (sieve X)</div></div><div class="chip g" style="left:1334px;top:659px;width:32px;height:28px"><div class="pt" style="left:11.45px;top:3.28px">R</div></div><div class="chip g" style="left:1378px;top:659px;width:32px;height:28px"><div class="pt" style="left:11.45px;top:3.28px">S</div></div>
</body></html>
